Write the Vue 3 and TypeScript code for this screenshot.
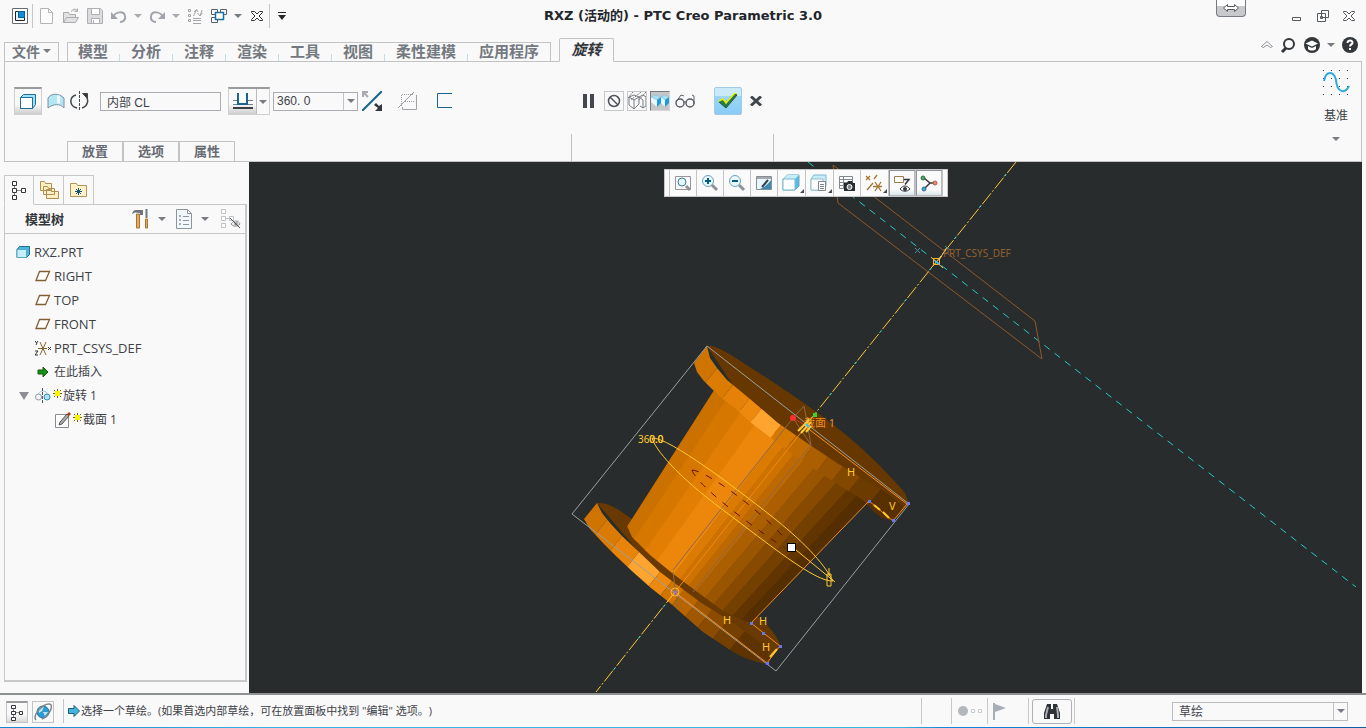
<script setup lang="ts">
import { ref } from 'vue'

type Point = [number, number]
type Stop = [number, number, string]

const menus: string[] = ['模型', '分析', '注释', '渲染', '工具', '视图', '柔性建模', '应用程序']
const panels: string[] = ['放置', '选项', '属性']
const section = ref('内部 CL')
const angle = ref('360. 0')
const filter = ref('草绘')

const planes: string[] = ['RIGHT', 'TOP', 'FRONT']

// Facets of the revolved body, from the lit side to the shaded side
const shades: [number, string][] = [
  [0, '#cb7100'], [0.08, '#d67700'], [0.18, '#e27e04'], [0.28, '#ec870b'], [0.42, '#dc7b04'],
  [0.47, '#cd7200'], [0.54, '#bd6900'], [0.6, '#ac5f00'], [0.67, '#9a5500'], [0.74, '#874a00'],
  [0.81, '#734000'], [0.88, '#623500'], [0.94, '#552e00'], [1, ''],
]
const top: [Point, Point] = [[714, 391], [868, 501]]
const bottom: [Point, Point] = [[619, 540], [741, 634]]
const mix = (edge: [Point, Point], t: number): string =>
  `${edge[0][0] + (edge[1][0] - edge[0][0]) * t},${edge[0][1] + (edge[1][1] - edge[0][1]) * t}`
const facets = shades.slice(0, -1).map(([t, fill], i) => {
  const end = shades[i + 1][0]
  return { fill, points: [mix(top, t), mix(top, end), mix(bottom, end), mix(bottom, t)].join(' ') }
})

// Facets of a flange rim: strips that run along the axis and are clipped to the rim's outline
const strips = (stops: Stop[]) =>
  stops.slice(0, -1).map(([x, y, fill], i) => {
    const [nx, ny] = stops[i + 1]
    return { fill, points: `${x + 12},${y - 15} ${nx + 12},${ny - 15} ${nx - 24},${ny + 30} ${x - 24},${y + 30}` }
  })
const upperRim = strips([
  [700, 340, '#cf7400'], [717, 368, '#db7b02'], [733, 385, '#e48106'], [750, 398, '#ed890d'], [762, 408, '#ffa52f'],
  [781, 425, '#d67900'], [796, 436, '#c26b00'], [812, 447, '#ab5f00'], [828, 457, '#985400'], [843, 467, '#824800'],
  [860, 477, '#6c3b00'], [880, 490, '#583000'], [925, 520, ''],
])
const lowerRim = strips([
  [590, 495, '#cf7400'], [607, 520, '#dc7b03'], [622, 536, '#e88409'], [639, 552, '#ffa52f'], [660, 572, '#ec890e'],
  [672, 581, '#d27500'], [684, 590, '#b86500'], [698, 601, '#9f5700'], [712, 610, '#8b4c00'], [728, 620, '#744000'],
  [745, 631, '#5f3300'], [790, 665, ''],
])

const vertices: Point[] = [[908, 503], [893, 520], [869, 501], [751, 623], [763, 633], [780, 646], [767, 663]]
const labels: { x: number; y: number; t: string }[] = [
  { x: 847, y: 476, t: 'H' }, { x: 889, y: 510, t: 'V' }, { x: 723, y: 624, t: 'H' },
  { x: 759, y: 625, t: 'H' }, { x: 762, y: 651, t: 'H' },
]
const gridDots: Point[] = [0, 8, 16, 24].flatMap((y) => [0, 8, 16, 24].map((x): Point => [x, y]))
</script>

<template>
  <div class="app">
    <header class="title-bar">
      <div class="quick">
        <button class="tool" aria-label="窗口"><svg width="16" height="16" viewBox="0 0 16 16"><path d="M.5.5h15v15H.5z" fill="#fff" stroke="#666b72" /><path d="M3.500 3.500h9v9h-9z" fill="#e4f3fa" stroke="#222" /><path d="M6.500 3.500h6v6h-6z" fill="#118bdb" stroke="#0b5f91" /></svg></button>
        <span class="rule"></span>
        <button class="tool first" aria-label="新建"><svg width="16" height="16" viewBox="0 0 16 16" fill="#fcfcfc" stroke="#b5b5b8"><path d="M1.500.5h8l4 4v11h-12zM9.500.5v4h4" /></svg></button>
        <button class="tool" aria-label="打开"><svg width="16" height="16" viewBox="0 0 16 16" fill="#e1e1e1" stroke="#aaaaae"><path d="M.5 14.500v-10h5l1 2h6v3M.5 14.500l3-5h12l-3 5zM8.500 3.500c1-3 4-3 6-.5m0-2.500V3.500H11.500" /></svg></button>
        <button class="tool" aria-label="保存"><svg width="16" height="16" viewBox="0 0 16 16" fill="#dcdcdf" stroke="#aeaeb3"><path d="M.5.5h13l2 2v13H.5z" /><path d="M4.500.5h8v6h-8zM4.500 10.500h8v5h-8zM6.500 12v3" fill="#fff" /></svg></button>
        <button class="tool" aria-label="撤消"><svg width="16" height="16" viewBox="0 0 16 16" fill="none" stroke="#a2a4ab" stroke-width="2"><path d="M2 9c3-6 11-6 12-1 1 4-2 6-5 6" /><path d="M0 4v7h7z" fill="#a2a4ab" stroke="none" /></svg></button>
        <button class="more pale" aria-label="撤消列表"></button>
        <button class="tool" aria-label="重做"><svg width="16" height="16" viewBox="0 0 16 16" fill="none" stroke="#a2a4ab" stroke-width="2"><path d="M14 9C11 3 3 3 2 8c-1 4 2 6 5 6" /><path d="M16 4v7H9z" fill="#a2a4ab" stroke="none" /></svg></button>
        <button class="more pale" aria-label="重做列表"></button>
        <button class="tool" aria-label="重新生成"><svg width="16" height="16" viewBox="0 0 16 16" fill="none" stroke="#a5a5a9"><path d="M1.500 1.500h2v2h-2zM1.500 6.500h2v2h-2zM1.500 11.500h2v2h-2zM6 10.500h8M6 12.500h8M6 15.500h8M6.500 8l3-6M7 4l2.500-2.500L11 4M15 2l-2 6M10.500 5l2.500 3 2.500-3" /></svg></button>
        <button class="tool" aria-label="窗口列表"><svg width="16" height="16" viewBox="0 0 16 16" fill="#fff" stroke="#5b6068"><path d="M.5 1.500h6v5h-6zM9.500 1.500h6v5h-6zM.5 9.500h6v5h-6z" /><path d="M4.500 4.500h8v7h-8z" stroke="#1b6f9c" stroke-width="1.500" /></svg></button>
        <button class="more" aria-label="窗口菜单"></button>
        <button class="tool" aria-label="关闭窗口"><svg width="12" height="12" viewBox="0 0 12 12" fill="#fff" stroke="#33363b"><path d="M.5 1.500h3L6 4l2.500-2.500h3v1L8 6l3.500 3.500v1h-3L6 8l-2.500 2.500h-3v-1L4 6 .5 2.500z" /></svg></button>
        <span class="rule"></span>
        <button class="tool" aria-label="自定义"><svg width="8" height="8" viewBox="0 0 8 8" fill="#24272b"><path d="M0 0h8v1H0zM0 3h8L4 8z" /></svg></button>
      </div>
      <h1>RXZ (活动的) - PTC Creo Parametric 3.0</h1>
      <div class="window-buttons">
        <button class="dock" aria-label="展开"><svg width="16" height="8" viewBox="0 0 16 8" fill="#fff" stroke="#55595f"><path d="M.5 4L4.500.5v2h7v-2L15.500 4l-4 3.500v-2h-7v2z" /></svg></button>
        <button aria-label="最小化"><svg width="12" height="12" viewBox="0 0 12 12" fill="none" stroke="#55595f"><path d="M1.500 7.500h8v3h-8z" /></svg></button>
        <button aria-label="还原"><svg width="12" height="12" viewBox="0 0 12 12" fill="#fff" stroke="#55595f"><path d="M4.500.5h7v7h-7zM.5 3.500h8v8h-8zM3.500 6.500h2v2h-2z" /></svg></button>
        <button aria-label="关闭"><svg width="12" height="12" viewBox="0 0 12 12" fill="#fff" stroke="#55595f"><path d="M.5 1.500h3L6 4l2.500-2.500h3v1L8 6l3.500 3.500v1h-3L6 8l-2.500 2.500h-3v-1L4 6 .5 2.500z" /></svg></button>
      </div>
    </header>

    <nav class="tab-row">
      <button class="file">文件<i class="caret"></i></button>
      <div class="menus"><button v-for="m in menus" :key="m">{{ m }}</button></div>
      <button class="active">旋转</button>
      <div class="helpers">
        <button class="fold-up" aria-label="最小化功能区"><svg width="12" height="8" viewBox="0 0 12 8" fill="#fff" stroke="#8b8e94"><path d="M.5 5.500L6 .5l5.500 5-2 1L6 4 2.500 6.500z" /></svg></button>
        <button aria-label="搜索"><svg width="16" height="16" viewBox="0 0 16 16" fill="none" stroke="#33363b"><circle cx="9" cy="7" r="5" stroke-width="2" /><path d="M6 11l-4 4" stroke-width="3" /></svg></button>
        <button aria-label="学习"><svg width="16" height="16" viewBox="0 0 16 16"><circle cx="8" cy="8" r="8" fill="#33363b" /><path d="M1.500 6.500L8 3.500l6 3-6 3zM4 9l4 2 4-2v3c-2 2-6 2-8 0z" fill="#fff" /></svg></button>
        <button class="more" aria-label="学习菜单"></button>
        <button aria-label="帮助"><svg width="16" height="16" viewBox="0 0 16 16"><circle cx="8" cy="8" r="8" fill="#33363b" /><path d="M5.500 6C5.500 2.500 11 3 10.500 6 10.300 7.500 8 7.500 8 9.500M8 11v2" fill="none" stroke="#fff" stroke-width="2" /></svg></button>
      </div>
    </nav>

    <section class="ribbon">
      <div class="feature">
        <div class="controls">
          <button class="pressed" aria-label="实体"><svg width="18" height="18" viewBox="0 0 18 18" stroke="#216d95"><path d="M1.500 4.500l3-3h12v10l-3 4h-12z" fill="#9be0f5" /><path d="M1.500 4.500h12v11h-12z" fill="#fff" /></svg></button>
          <button class="plain" aria-label="曲面"><svg width="18" height="16" viewBox="0 0 18 16"><path d="M1 15V5c3-5 11-5 16 0v10c-4-5-11-4-16 0z" fill="#b5e6f5" stroke="#7b929e" /><path d="M11.500 2.500v8" stroke="#e9f9fd" stroke-width="3" /></svg></button>
          <button class="plain" aria-label="旋转"><svg width="20" height="20" viewBox="0 0 20 20" fill="none" stroke="#44474c"><path d="M9.500 0v20" stroke-dasharray="3 1" /><path d="M6 4C-1 6-1 15 7 17M12 17c6-2 7-8 4-12" stroke-width="1.500" /><path d="M12.500 2.500h5v5z" fill="#33363b" /></svg></button>
          <input v-model="section" class="section" aria-label="草绘" />
          <div class="split">
            <button aria-label="深度"><svg width="22" height="18" viewBox="0 0 22 18"><path d="M1 7.500h6M15 7.500h6M1 11.500h20" stroke="#777b82" /><path d="M6 0v11h9V0" fill="#fff" stroke="#176590" stroke-width="2" /><path d="M1 15h20" stroke="#3b3e43" stroke-width="2" /></svg></button>
            <button class="more" aria-label="深度选项"></button>
          </div>
          <div class="combo"><input v-model="angle" aria-label="角度" /><button class="more" aria-label="角度列表"></button></div>
          <button class="plain wide" aria-label="反向"><svg width="20" height="20" viewBox="0 0 20 20"><path d="M0 20L20 0" stroke="#1b648c" stroke-width="2" /><path d="M1 6V1h5M1 1l5 5" stroke="#a7a9af" stroke-width="2" fill="none" /><path d="M20 13v7h-7l3-3-4-3 2-2 3 3z" fill="#33363b" /></svg></button>
          <button class="plain wide gap" aria-label="移除材料"><svg width="20" height="20" viewBox="0 0 20 20" fill="none" stroke="#a0a2a8"><path d="M0 17L16 1M18.500 4v14.500H4.500V16" /><path d="M3.500 15V3.500H15M7 10.500h10" stroke-dasharray="1 1" /></svg></button>
          <button class="plain wide gap" aria-label="加厚草绘"><svg width="16" height="16" viewBox="0 0 16 16" fill="none" stroke="#1b648c"><path d="M16 .5H1.500v14H16" /></svg></button>
        </div>
        <div class="panel-tabs"><button v-for="p in panels" :key="p">{{ p }}</button></div>
      </div>
      <div class="confirm">
        <div class="controls">
          <button class="plain" aria-label="暂停"><svg width="12" height="14" viewBox="0 0 12 14" fill="#44474d"><path d="M0 0h4v14H0zM7 0h4v14H7z" /></svg></button>
          <button class="boxed" aria-label="无预览"><svg width="14" height="14" viewBox="0 0 14 14" fill="none" stroke="#4d515a" stroke-width="1.500"><circle cx="7" cy="7" r="5.500" /><path d="M3 3l8 8" /></svg></button>
          <button class="boxed" aria-label="未连接"><svg width="18" height="18" viewBox="0 0 18 18" fill="none" stroke="#777a80"><path d="M1 5l5-2 5 2v7l-5 5-5-4zM1 5l5 3 5-3M6 8v9M11 5l4-2 3 2v9l-3 2-3-2M11 5l4 3v8" /><path d="M5 0L0 6M13 0L3 8M18 0l-8 9" stroke-dasharray="2 1" /></svg></button>
          <button class="boxed on" aria-label="连接"><svg width="18" height="18" viewBox="0 0 18 18"><path d="M0 5l5-2 5 2v6l-4 4zM10 5l4-2 4 2v6l-4 4z" fill="#209ad8" /><path d="M0 5l6 3v7l-6-5zM10 5l4 3v7l-4-4z" fill="#e7f7fd" /><path d="M0 5l5-2 5 2-4 3zM10 5l4-2 4 2-4 3z" fill="#aaddec" /></svg></button>
          <button class="plain glasses" aria-label="特征预览"><svg width="20" height="14" viewBox="0 0 20 14" fill="none" stroke="#5a5e66"><circle cx="5" cy="9" r="4" stroke-width="1.500" /><circle cx="15" cy="9" r="4" stroke-width="1.500" /><path d="M1 8l5-7 3 1M19 10V2l-2-1M9 8h2" /></svg></button>
          <button class="accept" aria-label="确定"><svg width="20" height="16" viewBox="0 0 20 16"><path d="M1 9l4-2 3 4 9-10 2 1L8 15z" fill="#247b50" stroke="#22572b" /><path d="M1 8l4-2 3 4 9-10h2" fill="none" stroke="#dff000" stroke-width="1.500" /></svg></button>
          <button class="plain cancel" aria-label="取消"><svg width="12" height="10" viewBox="0 0 12 10" stroke="#41454c" stroke-width="3"><path d="M1 .5l10 9M11 .5l-10 9" /></svg></button>
        </div>
      </div>
      <button class="datum">
        <svg width="28" height="28" viewBox="0 0 28 28"><rect v-for="([x, y], i) in gridDots" :key="i" :x="x + 1" :y="y + 1" width="1" height="1" fill="#33363b" /><path d="M2 12C4 1 12 2 14 11c1 13 9 14 13 6" fill="none" stroke="#2fa8dd" stroke-width="2" /></svg>
        <span>基准</span><i class="caret"></i>
      </button>
    </section>

    <main class="workspace">
      <aside class="navigator">
        <div class="nav-tabs">
          <button class="chosen" aria-label="模型树"><svg width="14" height="20" viewBox="0 0 14 20" fill="#fff" stroke="#33363b"><path d="M2.500 5v10M3 10.500h7" stroke="#888" /><path d="M.5 1.500h4v4h-4zM.5 8.500h4v4h-4zM.5 15.500h4v4h-4zM9.500 8.500h4v4h-4z" /></svg></button>
          <button aria-label="文件夹浏览器"><svg width="20" height="20" viewBox="0 0 20 20" fill="#fff0c2" stroke="#b08d55"><path d="M1.500 10.500v-9h4l1 2h6v7zM4.500 14.500v-8h4l1 2h6v6zM7.500 18.500v-9h4l1 2h7v7z" /></svg></button>
          <button aria-label="收藏夹"><svg width="18" height="16" viewBox="0 0 18 16"><path d="M.5 14.500v-13h6l1 2h9v11z" fill="#fff2cb" stroke="#b39356" /><path d="M8.500 6v7M5 9.500h7M6 7l5 5M11 7l-5 5" stroke="#175575" /></svg></button>
        </div>
        <div class="tree-panel">
          <div class="tree-head">
            <h2>模型树</h2>
            <button aria-label="设置"><svg width="18" height="20" viewBox="0 0 18 20"><path d="M0 5c1-4 3-4 5-4h6v5H8V4L3 3.500z" fill="#6f757d" /><path d="M4.500 5h3v14h-3z" fill="#e0ac66" stroke="#a8722f" /><path d="M14.500 0v9" stroke="#6f757d" stroke-width="2" /><path d="M13.500 10h2v9h-2z" fill="#e0ac66" stroke="#a8722f" /></svg></button>
            <button class="more" aria-label="设置菜单"></button>
            <button class="show" aria-label="显示"><svg width="17" height="20" viewBox="0 0 17 20" fill="#f2f9fc" stroke="#8c959b"><path d="M.5.5h11l4 4v15H.5zM11.500.5v4h4M7 7.500h6M7 11.500h6M7 15.500h6" /><path d="M3.500 6.500h1v1h-1zM3.500 10.500h1v1h-1zM3.500 14.500h1v1h-1z" /></svg></button>
            <button class="more" aria-label="显示菜单"></button>
            <button class="hide" aria-label="隐藏"><svg width="20" height="20" viewBox="0 0 20 20" fill="#fff" stroke="#c0c1c4"><path d="M.5.500h4v4h-4zM.5 7.500h4v4h-4zM.5 14.500h4v4h-4zM8.500 7.500h4v4h-4zM5 9.500h3" /><path d="M10 15c3-4 7-4 9 0-3 3-6 3-9 0z" stroke="#8d9096" /><circle cx="15" cy="15" r="2" fill="#8d9096" /><path d="M9 9l10 10" stroke="#555" /></svg></button>
          </div>
          <ul class="tree">
            <li class="root"><svg width="14" height="14" viewBox="0 0 14 14" stroke="#216d95"><path d="M1 4.500l2.500-3h10v8l-3 3H1z" fill="#4bb9de" /><path d="M1 4.500h9.500v8H1z" fill="#c5effa" stroke="#5aa9c6" /></svg>RXZ.PRT</li>
            <li v-for="p in planes" :key="p" class="child"><svg width="16" height="12" viewBox="0 0 16 12"><path d="M4.500 1.500h10l-4 9H1z" fill="#fff" stroke="#806030" stroke-width="1.300" /></svg>{{ p }}</li>
            <li class="child"><svg width="16" height="16" viewBox="0 0 16 16" fill="none" stroke="#85652f"><path d="M3 8.500h9M5 2l6 13M11 2L5 15" /><path d="M0 1l1.500 2L3 1M2 3L1 5M0 11h3l-3 4h3M13 7l3 3M16 7l-3 3" stroke="#33363b" /></svg>PRT_CSYS_DEF</li>
            <li class="child cjk"><svg width="16" height="12" viewBox="0 0 16 12"><path d="M3 4h5V1l5 5-5 5V8H3z" fill="#129417" stroke="#235210" /></svg>在此插入</li>
            <li class="parent cjk"><i class="fold"></i><svg width="16" height="16" viewBox="0 0 16 16" fill="none"><circle cx="3.500" cy="9" r="3" stroke="#8f979d" /><circle cx="12" cy="9" r="3" fill="#aee2f4" stroke="#2e91bd" /><path d="M3 6c3-4 7-4 10 0" stroke="#9cc8d8" /><path d="M7.500 0v16" stroke="#555" stroke-dasharray="3 1" /></svg><svg class="star" width="9" height="9" viewBox="0 0 9 9"><path d="M4.500 0v9M0 4.500h9M1 1l7 7M8 1L1 8" stroke="#6e6800" /><path d="M2 2h5v5H2z" fill="#fff200" /></svg>旋转 1</li>
            <li class="leaf cjk"><svg width="16" height="16" viewBox="0 0 16 16"><path d="M.5 2.500h13v13H.5z" fill="#fff" stroke="#888c92" /><path d="M4 13l1-3 7-8 2 2-7 8z" fill="#aaa" stroke="#555" /><path d="M12 2l2-2 2 2-2 2z" fill="#b23b2e" /></svg><svg class="star" width="9" height="9" viewBox="0 0 9 9"><path d="M4.500 0v9M0 4.500h9M1 1l7 7M8 1L1 8" stroke="#6e6800" /><path d="M2 2h5v5H2z" fill="#fff200" /></svg>截面 1</li>
          </ul>
        </div>
      </aside>

      <div class="viewport">
        <svg class="scene" viewBox="249 162 1113 531" preserveAspectRatio="xMidYMid slice">
          <defs>
            <clipPath id="body-outline"><path d="M714 380L627 526 632 537 650 555 672 573 700 594 723 611 740 619 751 623 868 501z" /></clipPath>
            <clipPath id="upper-outline"><path d="M707 346L710 358 717 368 727 380 750 399 778 423 807 443 837 463 860 477 887 493 905 508 893 521 882 518 873 511 863 500 845 489 820 473 790 452 767 435 750 422 737 410 724 400 713 390 703 380 697 372 694 363z" /></clipPath>
            <clipPath id="lower-outline"><path d="M597 503L602 513 610 523 622 536 637 550 660 572 680 587 700 602 727 619 750 635 767 648 770 661 767 664 757 662 745 658 733 652 718 642 703 632 687 618 670 603 651 588 633 572 617 557 603 543 590 529 584 519z" /></clipPath>
          </defs>
          <g fill="none">
            <path d="M808 162l548 425" stroke="#25c9c1" stroke-dasharray="7 6" />
            <path d="M833 165l202 156 7 38-204-156z" stroke="#8f592b" />
          </g>
          <!-- lower flange -->
          <path d="M597 503C612 502 620 512 640 524L751 610C768 624 779 638 780 646L767 663 700 612 637 550z" fill="#683900" />
          <g clip-path="url(#lower-outline)"><polygon v-for="(s, i) in lowerRim" :key="i" :points="s.points" :fill="s.fill" /></g>
          <!-- body -->
          <g clip-path="url(#body-outline)"><polygon v-for="(f, i) in facets" :key="i" :points="f.points" :fill="f.fill" :stroke="f.fill" /></g>
          <!-- upper flange -->
          <path d="M707 346c12-2 36 18 60 32 48 32 93 62 138 115l4 11-16 17-56-46-87-64z" fill="#663800" />
          <g clip-path="url(#upper-outline)"><polygon v-for="(s, i) in upperRim" :key="i" :points="s.points" :fill="s.fill" /></g>
          <!-- bounding box, axis and sketch -->
          <g fill="none" stroke="#9b9fa2">
            <path d="M707 346l202 158-133 167-204-157z" />
            <path d="M793 418L673 570M811 445L693 592M804 406l-11 12 18 27zM673 572l5 38" stroke="#8b6750" />
          </g>
          <path d="M803 430L675 592" stroke="#f08a18" fill="none" />
          <path d="M1016 162L806 425M675 592l-79 100" stroke="#ffc935" stroke-dasharray="14 2 2 2" fill="none" />
          <path d="M1006 174L806 425M665 605l-69 87" stroke="#2fd0d8" stroke-dasharray="3 37" fill="none" />
          <path d="M806 427l101 77-14 17-24-20-118 122 29 23-13 17-92-71" stroke="#f58d16" fill="none" />
          <g fill="none" stroke="#ffca2d">
            <path d="M652 438C669 437 738 490 770 515S823 562 833 581C815 582 770 545 723 510S655 449 652 438zM796 550l39 32M827 574h4v12h-4zM829 568v8" />
            <path d="M874 505l6 5M883 512l6 6M770 657l7-8" stroke-width="2" />
          </g>
          <path d="M692 470c20 2 85 55 95 72M692 470c5 17 75 67 93 78" fill="none" stroke="#650d00" stroke-dasharray="7 8" />
          <rect v-for="([x, y], i) in vertices" :key="i" :x="x - 1" :y="y - 1" width="3" height="3" fill="#6a75f0" />
          <rect x="787.500" y="543.500" width="8" height="8" fill="#fff" stroke="#000" />
          <path d="M793 418l13 8" stroke="#e32929" /><circle cx="793" cy="418" r="3" fill="#fa3030" />
          <path d="M813 413h4v4h-4z" fill="#32d52e" />
          <g class="mark" fill="#ffca2d"><text v-for="(l, i) in labels" :key="i" :x="l.x" :y="l.y">{{ l.t }}</text></g>
          <g class="angle" fill="#ffca2d"><text x="638" y="443">360.0</text><text x="649" y="443">0.0</text></g>
          <text class="sketch-name" x="804" y="427">截面 1</text>
          <path d="M798 431l9-9M801 433l10-11M806 432l5-6M809 419l-4 7" stroke="#ffcb37" stroke-width="2" />
          <path d="M806 424l3 3" stroke="#30bfff" stroke-width="2" />
          <circle cx="675" cy="592" r="4" fill="none" stroke="#f5b54b" /><path d="M673 592h5M675 590v5" stroke="#7774de" />
          <text class="csys" x="943" y="257">PRT_CSYS_DEF</text>
          <path d="M933.500 258.500h6v6h-6zM931 257l12 11M942 256l-11 12" fill="none" stroke="#ffb52d" /><path d="M935 261l4 3" stroke="#30bfff" stroke-width="2" /><path d="M939 260l8-13" stroke="#d9bd79" /><path d="M915 248l5 5M920 248l-5 5M945 246l5 4" stroke="#548a94" />
        </svg>

        <div class="view-tools">
          <button aria-label="重新调整"><svg width="20" height="20" viewBox="0 0 20 20" fill="none"><path d="M2.500 3.500h15v13h-15z" stroke="#94979c" /><circle cx="9" cy="9" r="4" fill="#e8f7fb" stroke="#3a7c9b" /><path d="M13 13l4 4" stroke="#8f9398" stroke-width="3" /></svg></button>
          <button aria-label="放大"><svg width="20" height="20" viewBox="0 0 20 20" fill="none"><circle cx="8" cy="8" r="5.500" fill="#e8f7fb" stroke="#6ba4bc" /><path d="M5 8h6M8 5v6" stroke="#075b89" stroke-width="2" /><path d="M12 12l5 5" stroke="#8f9398" stroke-width="3" /></svg></button>
          <button aria-label="缩小"><svg width="20" height="20" viewBox="0 0 20 20" fill="none"><circle cx="8" cy="8" r="5.500" fill="#e8f7fb" stroke="#6ba4bc" /><path d="M5 8h6" stroke="#075b89" stroke-width="2" /><path d="M12 12l5 5" stroke="#8f9398" stroke-width="3" /></svg></button>
          <button aria-label="重画"><svg width="20" height="20" viewBox="0 0 20 20"><path d="M2.500 3.500h15v13h-15z" fill="#e6f6fa" stroke="#868d93" /><path d="M17 7v9H6c5-2 8-5 11-9z" fill="#3d8bb0" /><path d="M3 4h14v2H3z" fill="#a5a8ac" /><path d="M8 14l6-7" stroke="#33414a" stroke-width="2" /></svg></button>
          <button class="drop" aria-label="显示样式"><svg width="20" height="20" viewBox="0 0 20 20"><path d="M2 6l4-4h12v11l-4 4H2z" fill="#54bee5" stroke="#63a7c2" /><path d="M6 2h12l-4 4H2z" fill="#c6eef9" /><path d="M2 6h12v11H2z" fill="#fff" stroke="#7db8cb" /></svg></button>
          <button class="drop" aria-label="已保存方向"><svg width="20" height="20" viewBox="0 0 20 20"><path d="M2 6l3-4h12v11l-3 4H2z" fill="#c6eef9" stroke="#7db8cb" /><path d="M2 6h12v11H2z" fill="#fff" stroke="#98bdc8" /><path d="M9.500 8.500h7v9h-7zM11 11.500h4M11 13.500h4M11 15.500h4" fill="#fff" stroke="#81858b" /></svg></button>
          <button aria-label="视图管理器"><svg width="20" height="20" viewBox="0 0 20 20"><path d="M2.500 3.500h13v12h-13zM2 6.500h13M2 9.500h13M2 12.500h13M6.500 3v12" fill="#fff" stroke="#84888e" /><path d="M7 10h3l1-2h4l1 2h2v8H7z" fill="#292c30" /><circle cx="12.500" cy="14" r="2.500" fill="#80858b" stroke="#fff" /></svg></button>
          <button class="drop" aria-label="基准显示"><svg width="20" height="20" viewBox="0 0 20 20" stroke="#a27734"><path d="M2 3l4 4M6 3L2 7M3 17l6-7M10 6l3-4M11 9l6 9M17 9l-6 9M9 13.500h9" stroke-width="1.300" /></svg></button>
          <button class="set" aria-label="注释显示"><svg width="20" height="20" viewBox="0 0 20 20" fill="#fff"><path d="M2.500 3.500h9v6h-9z" stroke="#9c7e4c" /><path d="M12 6.500h5l-4 5" fill="none" stroke="#33363b" stroke-width="1.500" /><path d="M8 16c3-4 7-4 10 0-3 3-7 3-10 0z" stroke="#33363b" /><circle cx="13" cy="16" r="2" fill="#33363b" /></svg></button>
          <button class="set" aria-label="旋转中心"><svg width="20" height="20" viewBox="0 0 20 20"><path d="M5 5l6 5h5M11 10l-6 6" fill="none" stroke="#33363b" stroke-width="1.500" /><circle cx="4" cy="5" r="2" fill="#4ba669" stroke="#326f4a" /><circle cx="16" cy="10" r="2" fill="#ed876f" stroke="#a85e50" /><circle cx="5" cy="16" r="2" fill="#4ca0c9" stroke="#2d6f94" /></svg></button>
        </div>
      </div>
    </main>

    <footer class="status">
      <button class="toggle down" aria-label="模型树"><svg width="12" height="18" viewBox="0 0 12 18" fill="#fff" stroke="#33363b"><path d="M2.500 4v10M3 8.500h6" stroke="#888" /><path d="M.5 1.500h4v3h-4zM.5 7.500h4v3h-4zM.5 13.500h4v3h-4zM8.500 7.500h3v3h-3z" /></svg></button>
      <button class="toggle" aria-label="浏览器"><svg width="18" height="18" viewBox="0 0 18 18"><circle cx="9" cy="9" r="6" fill="#289cd5" stroke="#216f9c" /><path d="M5 5l5-1-2 4-3 2zM9 9l5 0-3 4z" fill="#b9e6f5" /><path d="M2 17C-2 12 9 1 15 1s0 12-7 15" fill="none" stroke="#7e878d" stroke-width="1.500" /></svg></button>
      <span class="rule"></span>
      <p><svg width="12" height="12" viewBox="0 0 12 12"><path d="M.5 3.500H6V.5L11.500 6 6 11.500V8.500H.5z" fill="#42b5df" stroke="#1c5d7c" /></svg>选择一个草绘。(如果首选内部草绘，可在放置面板中找到 "编辑" 选项。)</p>
      <div class="indicators">
        <span class="cell small"></span>
        <span class="cell dots"><svg width="26" height="12" viewBox="0 0 26 12" fill="#b4b8bd"><circle cx="6" cy="6" r="5" /><path d="M14.500 4.500h3v3h-3zM21.500 4.500h3v3h-3z" fill="#fff" stroke="#c6cbcd" /></svg></span>
        <span class="cell flag"><svg width="13" height="17" viewBox="0 0 13 17" fill="#aaaeb7"><path d="M0 0h2v17H0zM2 1l11 4-11 4z" /></svg></span>
        <span class="cell find"><button aria-label="查找"><svg width="18" height="18" viewBox="0 0 18 18"><path d="M4 2h4v5h2V2h4l3 9v6h-6v-5H7v5H1v-6z" fill="#2f3237" /><path d="M5 5L3 13v3M14 5l1 8v3" stroke="#a7abb0" stroke-width="2" /></svg></button></span>
        <span class="cell"></span>
      </div>
      <div class="filter"><select v-model="filter" aria-label="选择过滤器"><option>草绘</option></select><span><i class="caret"></i></span></div>
    </footer>
  </div>
</template>

<style>
body { margin: 0; }
</style>

<style scoped>
* { box-sizing: border-box; }
.app { height: 100vh; min-height: 600px; display: flex; flex-direction: column; overflow: hidden; background: #f9f9f9; color: #3e4248; font: 12px/16px "Open Sans", "Noto Sans CJK SC", sans-serif; }
.app::after { content: ""; height: 1px; flex: none; background: linear-gradient(90deg, #1a84d0, #35b4e4 20%, #35b8dc 66%, #1387d8 69%, #0d5ea8); }
button { display: flex; align-items: center; justify-content: center; margin: 0; padding: 0; border: 0; border-radius: 0; background: none; color: inherit; font: inherit; flex: none; }
svg { display: block; flex: none; }
.rule { width: 1px; height: 24px; background: #c5c5c7; flex: none; }
.caret, .more::after { content: ""; display: block; border: 4px solid transparent; border-top: 4px solid #777b82; border-bottom: 0; }
.more { width: 14px; height: 20px; }
.more.pale::after { border-top-color: #a9abb0; }

.title-bar { display: grid; grid-template-columns: 1fr auto 1fr; height: 32px; flex: none; }
.quick { display: flex; align-items: center; padding-left: 8px; }
.tool { width: 24px; height: 24px; }
.first { margin-left: 2px; }
.title-bar h1 { margin: 0; font: bold 13px/32px "DejaVu Sans", "Noto Sans CJK SC", sans-serif; color: #222529; white-space: nowrap; }
.window-buttons { display: flex; justify-content: flex-end; padding-right: 4px; }
.window-buttons button { width: 26px; height: 32px; }
.window-buttons .dock { width: 30px; height: 17px; margin-right: 38px; border: 1px solid #777b82; border-top: 0; border-radius: 0 0 4px 4px; background: linear-gradient(#fff 40%, #c9c9cb 40%); }

.tab-row { display: flex; align-items: flex-end; height: 30px; padding: 0 4px; margin-bottom: -1px; position: relative; flex: none; font: bold 15px/16px "Noto Sans CJK SC", sans-serif; color: #747880; }
.tab-row > button, .menus button { padding-bottom: 2px; }
.file { width: 55px; height: 20px; border: 1px solid #c3c3c5; gap: 3px; font-size: 14px; }
.menus { display: flex; height: 20px; margin: 0 8px; border: 1px solid #c3c3c5; }
.menus button { padding: 0 11px 2px; position: relative; }
.menus button:first-child { padding-left: 10px; }
.menus button + button { border-left: 1px solid transparent; border-image: linear-gradient(transparent 60%, #bfdfe5 60%) 1; }
.active { width: 55px; height: 24px; border: 1px solid #c3c3c5; border-bottom-color: #f9f9f9; border-radius: 2px 2px 0 0; background: #f9f9f9; color: #33363b; font-style: italic; }
.helpers { display: flex; align-items: center; height: 34px; margin-left: auto; }
.helpers button { width: 24px; height: 24px; }
.helpers .fold-up { width: 18px; }
.helpers .more { width: 14px; }

.ribbon { display: flex; height: 101px; margin: 0 4px; border: 1px solid #c3c3c5; flex: none; }
.feature { width: 566px; display: flex; flex-direction: column; justify-content: space-between; flex: none; }
.controls { display: flex; align-items: center; height: 28px; margin-top: 25px; padding-left: 9px; }
.pressed, .split { height: 28px; border: 1px solid #d0d0d2; border-top: 2px solid #999b9f; background: linear-gradient(#f9f9f9 60%, #cfcfcf); }
.pressed { width: 28px; }
.plain { width: 24px; height: 24px; }
.pressed + .plain { margin-left: 2px; }
.section { width: 121px; height: 19px; margin-left: 8px; }
.section, .combo { border: 1px solid #aaacb2; background: #f9f9f9; color: #3e4248; font: 12px/16px "Liberation Sans", "Noto Sans CJK SC", sans-serif; }
.section { padding: 0 6px; }
.split { display: flex; width: 42px; margin-left: 7px; }
.split button { width: 27px; height: 25px; }
.split .more { width: 13px; border-left: 1px solid #bbb; background: #f9f9f9; }
.combo { display: flex; width: 85px; height: 19px; margin-left: 3px; }
.combo input { flex: 1; min-width: 0; padding: 0 3px; border: 0; background: none; font: inherit; color: inherit; }
.combo .more { height: 17px; border-left: 1px solid #c3c3c5; }
.wide { margin-left: 2px; }
.wide.gap { margin-left: 12px; }
.panel-tabs { display: flex; padding-left: 62px; }
.panel-tabs button { width: 56px; height: 20px; padding-bottom: 2px; border: 1px solid #c3c3c5; border-bottom: 0; font: bold 13px/16px "Noto Sans CJK SC", sans-serif; color: #666a72; }
.confirm { width: 203px; flex: none; border-right: 1px solid transparent; border-left: 1px solid transparent; border-image: linear-gradient(transparent 72%, #c3c3c5 72%) 1; }
.confirm .controls { padding-left: 5px; }
.boxed { width: 20px; height: 20px; margin-left: 3px; border: 1px solid #c8c8ca; }
.boxed.on { border-color: #77797e #d5d5d5 #d5d5d5 #77797e; background: #c5c6c8; }
.glasses { margin-left: 3px; }
.accept { width: 28px; height: 28px; margin-left: 17px; border: 1px solid #a3cce4; border-radius: 2px; background: linear-gradient(#caeaf9 30%, #9cd6f8 32%, #89ccf7); }
.cancel { margin-left: 2px; }
.datum { flex-direction: column; justify-content: flex-start; width: 50px; margin-left: auto; padding-top: 7px; gap: 9px; font: 12px/18px "Noto Sans CJK SC", sans-serif; }
.datum .caret { margin-top: 4px; }

.workspace { flex: 1; min-height: 0; display: flex; padding-right: 4px; }
.navigator { width: 249px; display: flex; flex-direction: column; padding: 13px 2px 11px 4px; flex: none; }
.nav-tabs { display: flex; height: 30px; margin-bottom: -1px; position: relative; }
.nav-tabs button { width: 30px; border: 1px solid #c8c8ca; border-left: 0; }
.nav-tabs .chosen { border-left: 1px solid #c8c8ca; border-bottom-color: #f9f9f9; background: #f9f9f9; }
.tree-panel { flex: 1; border: 1px solid #c8c8ca; border-right-width: 2px; border-bottom-width: 2px; }
.tree-head { display: flex; align-items: center; height: 29px; padding-left: 20px; border-bottom: 1px solid #c8c8ca; }
.tree-head h2 { margin: 0 auto 0 0; font: bold 13px/20px "Noto Sans CJK SC", sans-serif; color: #33363b; }
.tree-head .more { width: 24px; }
.show { margin-left: 2px; }
.hide { margin: 0 4px; }
.tree { list-style: none; margin: 0; padding: 6px 0; }
.tree li { display: flex; align-items: center; height: 24px; font-size: 13px; line-height: 24px; }
.tree .cjk { font-size: 12px; }
.tree .root { padding-left: 11px; gap: 4px; }
.tree .child { padding-left: 30px; gap: 3px; }
.tree .parent { padding-left: 14px; gap: 1px; }
.tree .leaf { padding-left: 50px; gap: 1px; }
.fold { border: 5px solid transparent; border-top: 8px solid #8c8e93; border-bottom: 0; margin-right: 5px; }
.star { margin: 0 0 6px 1px; }

.viewport { flex: 1; min-width: 0; position: relative; background: #282c2d; }
.scene { position: absolute; inset: 0; width: 100%; height: 100%; }
.mark { font: 11px "Noto Sans", sans-serif; }
.angle { font: 10px "Noto Sans", sans-serif; }
.sketch-name { font: 11px "Noto Sans", "Noto Sans CJK SC", sans-serif; fill: #f38d1a; }
.csys { font: 10px "Noto Sans", sans-serif; fill: #93602f; }
.view-tools { position: absolute; top: 7px; left: 50%; transform: translateX(-50%); display: flex; height: 28px; padding: 0 4px; border: 1px solid #c8c8ca; background: #fafafa; }
.view-tools button { width: 27px; position: relative; border-left: 1px solid #c3c3c5; }
.view-tools button:last-child { width: 28px; border-right: 1px solid #c3c3c5; }
.view-tools .drop { width: 28px; }
.view-tools .drop::after { content: ""; position: absolute; right: 1px; bottom: 3px; border: solid transparent; border-width: 0 0 4px 4px; border-bottom-color: #44474c; }
.view-tools .set { box-shadow: inset 1px 1px #92949a, inset -1px -1px #b8b9bd; background: linear-gradient(#fafafa 75%, #d4e3e7); }

.status { display: flex; align-items: center; height: 34px; padding: 0 18px 0 6px; border-top: 2px solid #8e9192; flex: none; }
.toggle { width: 22px; height: 22px; border: 1px solid #c3c3c5; margin: 2px 4px 0 0; }
.toggle.down { border-top: 2px solid #999b9f; background: linear-gradient(#f9f9f9 60%, #d8d8d8); }
.status > .rule { margin-left: 5px; }
.status p { display: flex; align-items: center; margin: 0 auto 0 4px; gap: 1px; font-size: 11px; line-height: 16px; white-space: nowrap; text-spacing-trim: space-all; }
.indicators { display: flex; margin-right: 92px; }
.cell { display: flex; align-items: center; height: 26px; border-left: 1px solid #c8c8ca; padding-left: 5px; }
.small { width: 30px; }
.dots { width: 36px; }
.flag { width: 41px; }
.find { width: 46px; padding-left: 3px; }
.find button { width: 40px; height: 25px; border: 1px solid #aeb0b5; border-radius: 3px; }
.filter { display: flex; width: 176px; height: 19px; position: relative; }
.filter select { width: 100%; appearance: none; border: 1px solid #bbbdc1; border-radius: 0; background: #f9f9f9; padding: 0 6px; font: 12px/16px "Noto Sans CJK SC", sans-serif; color: #3e4248; }
.filter span { position: absolute; right: 1px; top: 1px; bottom: 1px; width: 14px; border-left: 1px solid #c3c3c5; display: flex; align-items: center; justify-content: center; pointer-events: none; }
</style>
